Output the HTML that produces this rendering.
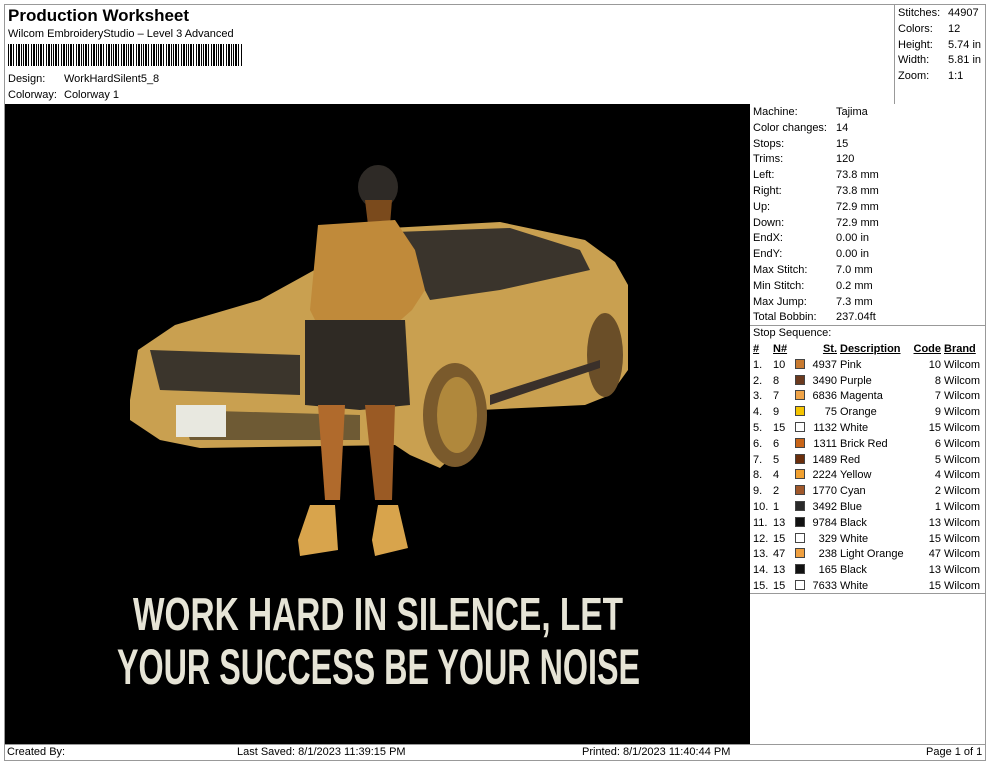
<!DOCTYPE html>
<html><head><meta charset="utf-8"><style>
*{margin:0;padding:0;box-sizing:border-box}
body{width:990px;height:762px;background:#fff;font-family:"Liberation Sans",Arial,sans-serif;font-size:11px;color:#000;position:relative;overflow:hidden}
.a{position:absolute;white-space:nowrap}
.ln{position:absolute;background:#999}
.sw{display:inline-block;width:10px;height:10px;border:1px solid #444;vertical-align:-1px}
</style></head><body>
<div class="ln" style="left:4px;top:4px;width:982px;height:1px"></div>
<div class="ln" style="left:4px;top:4px;width:1px;height:757px"></div>
<div class="ln" style="left:985px;top:4px;width:1px;height:757px"></div>
<div class="ln" style="left:894px;top:4px;width:1px;height:100px"></div>
<div class="ln" style="left:750px;top:325px;width:236px;height:1px"></div>
<div class="ln" style="left:750px;top:593px;width:236px;height:1px"></div>
<div class="ln" style="left:4px;top:744px;width:982px;height:1px"></div>
<div class="ln" style="left:4px;top:760px;width:982px;height:1px"></div>

<div class="a" style="left:8px;top:6px;font-size:17px;font-weight:bold">Production Worksheet</div>
<div class="a" style="left:8px;top:28px">Wilcom EmbroideryStudio – Level 3 Advanced</div>
<div class="a" style="left:8px;top:44px;width:234px;height:22px;background:repeating-linear-gradient(90deg,#000 0 1px,#fff 1px 2px,#000 2px 4px,#fff 4px 5px,#000 5px 6px,#fff 6px 8px,#000 8px 9px,#fff 9px 10px,#000 10px 12px,#fff 12px 13px,#000 13px 14px,#fff 14px 15px)"></div>
<div class="a" style="left:8px;top:73px">Design:</div><div class="a" style="left:64px;top:73px">WorkHardSilent5_8</div>
<div class="a" style="left:8px;top:89px">Colorway:</div><div class="a" style="left:64px;top:89px">Colorway 1</div>

<div class="a" style="left:898px;top:6px;line-height:15.8px">Stitches:<br>Colors:<br>Height:<br>Width:<br>Zoom:</div>
<div class="a" style="left:948px;top:6px;line-height:15.8px">44907<br>12<br>5.74 in<br>5.81 in<br>1:1</div>

<div class="a" style="left:5px;top:104px;width:745px;height:640px;background:#000">
<svg width="745" height="640" viewBox="5 104 745 640" xmlns="http://www.w3.org/2000/svg">
<path d="M130,400 L138,350 L175,325 L260,300 L300,278 L390,228 L500,222 L585,240 L615,262 L628,285 L628,370 L610,395 L585,405 L480,410 L470,440 L440,468 L410,455 L395,445 L200,448 L160,440 L130,420 Z" fill="#c9a050"/>
<path d="M395,232 L510,228 L580,250 L590,270 L500,290 L430,300 Z" fill="#3a342c"/>
<path d="M150,350 L300,355 L300,395 L160,390 Z" fill="#3b352c"/>
<path d="M180,410 L360,415 L360,440 L190,440 Z" fill="#6e5a34"/>
<rect x="176" y="405" width="50" height="32" fill="#e8e8e0"/>
<ellipse cx="455" cy="415" rx="32" ry="52" fill="#7a5a2c"/>
<ellipse cx="457" cy="415" rx="20" ry="38" fill="#b0883c"/>
<ellipse cx="605" cy="355" rx="18" ry="42" fill="#6a4e28"/>
<path d="M490,395 L600,360 L600,368 L490,405 Z" fill="#3a302a"/>
<ellipse cx="378" cy="187" rx="20" ry="22" fill="#2e2a26"/>
<path d="M365,200 L392,200 L390,225 L368,225 Z" fill="#7a4a1c"/>
<path d="M318,225 L395,220 L415,250 L425,290 L412,310 L395,325 L320,330 L310,310 Z" fill="#c08a3a"/>
<path d="M305,320 L405,320 L410,405 L360,410 L305,405 Z" fill="#2f2a24"/>
<path d="M318,405 L345,405 L340,500 L325,500 Z" fill="#b06a2c"/>
<path d="M365,405 L395,405 L392,500 L375,500 Z" fill="#9a5a24"/>
<path d="M298,540 L310,505 L335,505 L338,550 L300,556 Z" fill="#d8a44c"/>
<path d="M372,540 L378,505 L398,505 L408,548 L375,556 Z" fill="#d8a44c"/>
<g fill="#e6e4d6" font-family="Liberation Sans, Arial, sans-serif" font-weight="bold">
<text x="133" y="630" font-size="46" textLength="490" lengthAdjust="spacingAndGlyphs">WORK HARD IN SILENCE, LET</text>
<text x="117" y="684" font-size="50" textLength="523" lengthAdjust="spacingAndGlyphs">YOUR SUCCESS BE YOUR NOISE</text>
</g>
</svg></div>

<div class="a" style="left:753px;top:105px;line-height:15.8px">Machine:<br>Color changes:<br>Stops:<br>Trims:<br>Left:<br>Right:<br>Up:<br>Down:<br>EndX:<br>EndY:<br>Max Stitch:<br>Min Stitch:<br>Max Jump:<br>Total Bobbin:</div>
<div class="a" style="left:836px;top:105px;line-height:15.8px">Tajima<br>14<br>15<br>120<br>73.8 mm<br>73.8 mm<br>72.9 mm<br>72.9 mm<br>0.00 in<br>0.00 in<br>7.0 mm<br>0.2 mm<br>7.3 mm<br>237.04ft</div>
<div class="a" style="left:753px;top:327px">Stop Sequence:</div>
<table class="a" style="left:751px;top:342px;border-collapse:collapse;font-size:11px;line-height:15.8px">
<tr style="font-weight:bold;text-decoration:underline"><td style="width:22px;padding-left:2px">#</td><td style="width:22px">N#</td><td style="width:14px"></td><td style="width:28px;text-align:right">St.</td><td style="width:76px;padding-left:3px">Description</td><td style="width:28px;text-align:right">Code</td><td style="padding-left:3px">Brand</td></tr>
<tr><td style="padding-left:2px">1.</td><td>10</td><td><span class="sw" style="background:#c87a30"></span></td><td style="text-align:right">4937</td><td style="padding-left:3px">Pink</td><td style="text-align:right">10</td><td style="padding-left:3px">Wilcom</td></tr>
<tr><td style="padding-left:2px">2.</td><td>8</td><td><span class="sw" style="background:#6b3a1e"></span></td><td style="text-align:right">3490</td><td style="padding-left:3px">Purple</td><td style="text-align:right">8</td><td style="padding-left:3px">Wilcom</td></tr>
<tr><td style="padding-left:2px">3.</td><td>7</td><td><span class="sw" style="background:#f0a448"></span></td><td style="text-align:right">6836</td><td style="padding-left:3px">Magenta</td><td style="text-align:right">7</td><td style="padding-left:3px">Wilcom</td></tr>
<tr><td style="padding-left:2px">4.</td><td>9</td><td><span class="sw" style="background:#f5c400"></span></td><td style="text-align:right">75</td><td style="padding-left:3px">Orange</td><td style="text-align:right">9</td><td style="padding-left:3px">Wilcom</td></tr>
<tr><td style="padding-left:2px">5.</td><td>15</td><td><span class="sw" style="background:#fff"></span></td><td style="text-align:right">1132</td><td style="padding-left:3px">White</td><td style="text-align:right">15</td><td style="padding-left:3px">Wilcom</td></tr>
<tr><td style="padding-left:2px">6.</td><td>6</td><td><span class="sw" style="background:#c86418"></span></td><td style="text-align:right">1311</td><td style="padding-left:3px">Brick Red</td><td style="text-align:right">6</td><td style="padding-left:3px">Wilcom</td></tr>
<tr><td style="padding-left:2px">7.</td><td>5</td><td><span class="sw" style="background:#6a2e0c"></span></td><td style="text-align:right">1489</td><td style="padding-left:3px">Red</td><td style="text-align:right">5</td><td style="padding-left:3px">Wilcom</td></tr>
<tr><td style="padding-left:2px">8.</td><td>4</td><td><span class="sw" style="background:#f0a030"></span></td><td style="text-align:right">2224</td><td style="padding-left:3px">Yellow</td><td style="text-align:right">4</td><td style="padding-left:3px">Wilcom</td></tr>
<tr><td style="padding-left:2px">9.</td><td>2</td><td><span class="sw" style="background:#a0582a"></span></td><td style="text-align:right">1770</td><td style="padding-left:3px">Cyan</td><td style="text-align:right">2</td><td style="padding-left:3px">Wilcom</td></tr>
<tr><td style="padding-left:2px">10.</td><td>1</td><td><span class="sw" style="background:#2a2a2a"></span></td><td style="text-align:right">3492</td><td style="padding-left:3px">Blue</td><td style="text-align:right">1</td><td style="padding-left:3px">Wilcom</td></tr>
<tr><td style="padding-left:2px">11.</td><td>13</td><td><span class="sw" style="background:#111"></span></td><td style="text-align:right">9784</td><td style="padding-left:3px">Black</td><td style="text-align:right">13</td><td style="padding-left:3px">Wilcom</td></tr>
<tr><td style="padding-left:2px">12.</td><td>15</td><td><span class="sw" style="background:#fff"></span></td><td style="text-align:right">329</td><td style="padding-left:3px">White</td><td style="text-align:right">15</td><td style="padding-left:3px">Wilcom</td></tr>
<tr><td style="padding-left:2px">13.</td><td>47</td><td><span class="sw" style="background:#f0a040"></span></td><td style="text-align:right">238</td><td style="padding-left:3px">Light Orange</td><td style="text-align:right">47</td><td style="padding-left:3px">Wilcom</td></tr>
<tr><td style="padding-left:2px">14.</td><td>13</td><td><span class="sw" style="background:#111"></span></td><td style="text-align:right">165</td><td style="padding-left:3px">Black</td><td style="text-align:right">13</td><td style="padding-left:3px">Wilcom</td></tr>
<tr><td style="padding-left:2px">15.</td><td>15</td><td><span class="sw" style="background:#fff"></span></td><td style="text-align:right">7633</td><td style="padding-left:3px">White</td><td style="text-align:right">15</td><td style="padding-left:3px">Wilcom</td></tr>
</table>

<div class="a" style="left:7px;top:746px">Created By:</div>
<div class="a" style="left:237px;top:746px">Last Saved: 8/1/2023 11:39:15 PM</div>
<div class="a" style="left:582px;top:746px">Printed: 8/1/2023 11:40:44 PM</div>
<div class="a" style="left:926px;top:746px">Page 1 of 1</div>
</body></html>
